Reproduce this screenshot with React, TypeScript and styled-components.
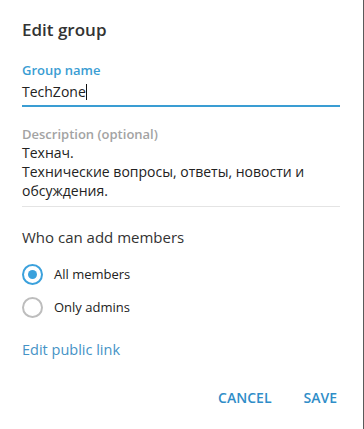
import React, { useState } from 'react'
import styled, { createGlobalStyle } from 'styled-components'

const GlobalStyle = createGlobalStyle`
    html, body {
        margin: 0;
        padding: 0;
        background: #fff;
    }
    body {
        font-family: "Open Sans", "Liberation Sans", sans-serif;
    }
`

const Dialog = styled.div`
    box-sizing: border-box;
    width: 364px;
    height: 429px;
    padding: 20px 23px 0 22px;
    background: #fff;
    border-right: 1px solid #5a5a5a;
    display: flex;
    flex-direction: column;
`

const Title = styled.div`
    font-size: 17px;
    line-height: 20px;
    font-weight: 600;
    color: #333;
`

const Field = styled.div<{ $active?: boolean; $top: number }>`
    margin-top: ${p => p.$top}px;
    padding-bottom: ${p => (p.$active ? 4 : 6)}px;
    border-bottom: ${p => (p.$active ? '2px solid #3a9dd3' : '1px solid #e4e4e4')};
`

const FieldLabel = styled.div<{ $active?: boolean }>`
    font-size: 13px;
    line-height: 16px;
    font-weight: 600;
    color: ${p => (p.$active ? '#3a9dd3' : '#a3a3a3')};
`

const FieldValue = styled.div<{ $gap: number }>`
    margin-top: ${p => p.$gap}px;
    font-size: 14px;
    line-height: 19px;
    color: #222;
`

const Caret = styled.span`
    display: inline-block;
    width: 1px;
    height: 16px;
    background: #111;
    vertical-align: -3px;
`

const SectionTitle = styled.div`
    margin-top: 20px;
    font-size: 15px;
    line-height: 20px;
    color: #333;
`

const RadioList = styled.div`
    margin-top: 16px;
    display: flex;
    flex-direction: column;
    gap: 11px;
`

const RadioRow = styled.label`
    display: flex;
    align-items: center;
    gap: 11px;
    height: 22px;
    cursor: pointer;
    font-size: 13px;
    color: #222;
`

const RadioCircle = styled.span<{ $checked: boolean }>`
    box-sizing: border-box;
    width: 21px;
    height: 21px;
    border-radius: 50%;
    border: 2px solid ${p => (p.$checked ? '#3ba1dc' : '#bdbdbd')};
    display: flex;
    align-items: center;
    justify-content: center;
    &::after {
        content: '';
        width: 9px;
        height: 9px;
        border-radius: 50%;
        background: #3ba1dc;
        display: ${p => (p.$checked ? 'block' : 'none')};
    }
`

const LinkButton = styled.div`
    margin-top: 22px;
    font-size: 14.5px;
    line-height: 20px;
    color: #4593c6;
    cursor: pointer;
`

const Buttons = styled.div`
    margin-top: 28px;
    display: flex;
    justify-content: flex-end;
    gap: 32px;
    padding-right: 3px;
`

const FlatButton = styled.button`
    background: none;
    border: none;
    padding: 0;
    font-family: inherit;
    font-size: 14px;
    line-height: 20px;
    font-weight: 600;
    color: #2f8dc8;
    cursor: pointer;
`

const options = ['All members', 'Only admins']

const App = () => {
    const [who, setWho] = useState(0)
    return (
        <>
            <GlobalStyle />
            <Dialog>
                <Title>Edit group</Title>
                <Field $active $top={22}>
                    <FieldLabel $active>Group name</FieldLabel>
                    <FieldValue $gap={4}>TechZone<Caret /></FieldValue>
                </Field>
                <Field $top={19}>
                    <FieldLabel>Description (optional)</FieldLabel>
                    <FieldValue $gap={1}>
                        Технач.<br />
                        Технические вопросы, ответы, новости и обсуждения.
                    </FieldValue>
                </Field>
                <SectionTitle>Who can add members</SectionTitle>
                <RadioList>
                    {options.map((o, i) => (
                        <RadioRow key={o} onClick={() => setWho(i)}>
                            <RadioCircle $checked={who === i} />
                            {o}
                        </RadioRow>
                    ))}
                </RadioList>
                <LinkButton>Edit public link</LinkButton>
                <Buttons>
                    <FlatButton>CANCEL</FlatButton>
                    <FlatButton>SAVE</FlatButton>
                </Buttons>
            </Dialog>
        </>
    )
}

export default App
